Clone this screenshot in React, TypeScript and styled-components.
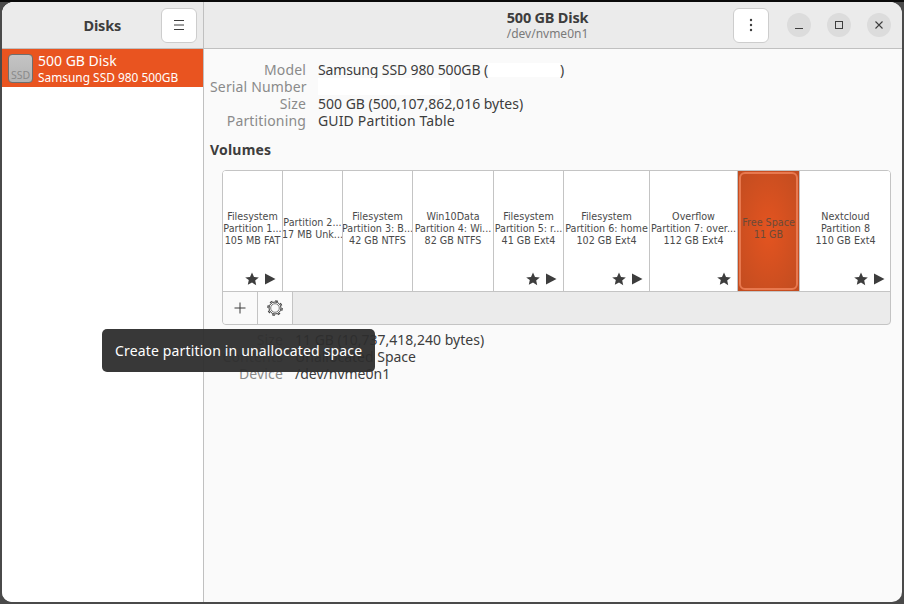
import styled, { createGlobalStyle } from "styled-components";

const partitions = [
  { width: 60, lines: ["Filesystem", "Partition 1...", "105 MB FAT"], star: true, play: true },
  { width: 60, lines: ["Partition 2...", "17 MB Unk..."] },
  { width: 70, lines: ["Filesystem", "Partition 3: B...", "42 GB NTFS"] },
  { width: 81, lines: ["Win10Data", "Partition 4: Wi...", "82 GB NTFS"] },
  { width: 70, lines: ["Filesystem", "Partition 5: r...", "41 GB Ext4"], star: true, play: true },
  { width: 86, lines: ["Filesystem", "Partition 6: home", "102 GB Ext4"], star: true, play: true },
  { width: 88, lines: ["Overflow", "Partition 7: over...", "112 GB Ext4"], star: true },
  { width: 62, lines: ["Free Space", "11 GB"], selected: true },
  { width: 91, lines: ["Nextcloud", "Partition 8", "110 GB Ext4"], star: true, play: true },
];

const StarIcon = () => (
  <svg width="14" height="14" viewBox="0 0 14 14">
    <path d="M7 0.5l2 4.4 4.8.5-3.6 3.2 1 4.7L7 10.4l-4.2 2.4 1-4.7L.2 5.4 5 4.9z" fill="#3d3d3d" />
  </svg>
);

const PlayIcon = () => (
  <svg width="12" height="12" viewBox="0 0 12 12">
    <path d="M1 0.5L11.5 6 1 11.5z" fill="#3d3d3d" />
  </svg>
);

const App = () => {
  return (
    <>
      <GlobalStyle />
      <Window>
        <Sidebar>
          <SideHeader>
            <SideTitle>Disks</SideTitle>
            <HeaderButton>
              <svg width="16" height="16" viewBox="0 0 16 16">
                <path d="M3 3.5h10M3 8h10M3 12.5h10" stroke="#3d3d3d" strokeWidth="1" fill="none" />
              </svg>
            </HeaderButton>
          </SideHeader>
          <DiskRow>
            <DiskIcon>SSD</DiskIcon>
            <DiskText>
              <DiskName>500 GB Disk</DiskName>
              <DiskModel>Samsung SSD 980 500GB</DiskModel>
            </DiskText>
          </DiskRow>
        </Sidebar>
        <Main>
          <MainHeader>
            <span />
            <HeaderTitles>
              <MainTitle>500 GB Disk</MainTitle>
              <MainSub>/dev/nvme0n1</MainSub>
            </HeaderTitles>
            <HeaderActions>
              <HeaderButton>
                <svg width="16" height="16" viewBox="0 0 16 16">
                  <circle cx="8" cy="3" r="1.2" fill="#3d3d3d" />
                  <circle cx="8" cy="8" r="1.2" fill="#3d3d3d" />
                  <circle cx="8" cy="13" r="1.2" fill="#3d3d3d" />
                </svg>
              </HeaderButton>
              <WindowControls>
                <RoundButton>
                  <svg width="10" height="10" viewBox="0 0 10 10">
                    <path d="M1 8.5h8" stroke="#3d3d3d" strokeWidth="1" />
                  </svg>
                </RoundButton>
                <RoundButton>
                  <svg width="10" height="10" viewBox="0 0 10 10">
                    <rect x="1.5" y="1.5" width="7" height="7" stroke="#3d3d3d" fill="none" />
                  </svg>
                </RoundButton>
                <RoundButton>
                  <svg width="10" height="10" viewBox="0 0 10 10">
                    <path d="M1.5 1.5l7 7M8.5 1.5l-7 7" stroke="#3d3d3d" strokeWidth="1.1" />
                  </svg>
                </RoundButton>
              </WindowControls>
            </HeaderActions>
          </MainHeader>
          <Content>
            <DiskInfo>
              <InfoLabel>Model</InfoLabel>
              <InfoValue $spacing={-0.13}>
                Samsung SSD 980 500GB (<Redacted $width={72} $height={14} />)
              </InfoValue>
              <InfoLabel>Serial Number</InfoLabel>
              <InfoValue>
                <Redacted $width={132} $height={17} />
              </InfoValue>
              <InfoLabel>Size</InfoLabel>
              <InfoValue>500 GB (500,107,862,016 bytes)</InfoValue>
              <InfoLabel>Partitioning</InfoLabel>
              <InfoValue $spacing={0.15}>GUID Partition Table</InfoValue>
            </DiskInfo>
            <VolumesTitle>Volumes</VolumesTitle>
            <VolumeBox>
              <PartitionRow>
                {partitions.map((p) => (
                  <Partition key={p.lines.join()} $width={p.width} $selected={p.selected}>
                    {p.lines.map((line) => (
                      <PartitionLine key={line}>{line}</PartitionLine>
                    ))}
                    {p.star && (
                      <PartitionIcons>
                        <StarIcon />
                        {p.play && <PlayIcon />}
                      </PartitionIcons>
                    )}
                  </Partition>
                ))}
              </PartitionRow>
              <VolumeToolbar>
                <ToolButton>
                  <svg width="14" height="14" viewBox="0 0 14 14">
                    <path d="M7 1.5v11M1.5 7h11" stroke="#3d3d3d" strokeWidth="1" />
                  </svg>
                </ToolButton>
                <ToolButton>
                  <svg width="18" height="18" viewBox="0 0 18 18" fill="none">
                    <circle cx="9" cy="9" r="7.2" stroke="#3d3d3d" strokeWidth="1.2" strokeDasharray="2.8 2.85" />
                    <circle cx="9" cy="9" r="6" stroke="#3d3d3d" strokeWidth="1" />
                    <circle cx="9" cy="9" r="4.3" stroke="#777777" strokeWidth="1" />
                  </svg>
                </ToolButton>
              </VolumeToolbar>
            </VolumeBox>
            <VolumeInfo>
              <InfoLabel>Size</InfoLabel>
              <InfoValue>11 GB (10,737,418,240 bytes)</InfoValue>
              <InfoLabel>Contents</InfoLabel>
              <InfoValue>Unallocated Space</InfoValue>
              <InfoLabel>Device</InfoLabel>
              <InfoValue>/dev/nvme0n1</InfoValue>
            </VolumeInfo>
          </Content>
        </Main>
        <Tooltip>Create partition in unallocated space</Tooltip>
      </Window>
    </>
  );
};

export default App;

const GlobalStyle = createGlobalStyle`
  html, body {
    margin: 0;
    padding: 0;
    width: 904px;
    height: 604px;
    overflow: hidden;
    background: linear-gradient(#0a0a0a 0 2px, #4a4a4a 2px);
    font-family: "Noto Sans", sans-serif;
  }
`;
const Window = styled.div`
  position: relative;
  box-sizing: border-box;
  width: 900px;
  height: 600px;
  margin: 2px 0 0 2px;
  display: flex;
  border-radius: 12px 12px 10px 10px;
  overflow: hidden;
  background: #fafafa;
  color: #3d3d3d;
`;
const Sidebar = styled.div`
  width: 201px;
  flex-shrink: 0;
  display: flex;
  flex-direction: column;
  background: #ffffff;
  border-right: 1px solid #c0c0c0;
`;
const SideHeader = styled.div`
  box-sizing: border-box;
  height: 47px;
  display: flex;
  align-items: center;
  justify-content: flex-end;
  padding: 0 6px 0 0;
  gap: 40px;
  background: #ebebeb;
  border-bottom: 1px solid #c0c0c0;
`;
const SideTitle = styled.div`
  font-size: 14.5px;
  font-weight: 700;
  letter-spacing: -0.2px;
`;
const HeaderButton = styled.div`
  box-sizing: border-box;
  width: 36px;
  height: 35px;
  display: flex;
  align-items: center;
  justify-content: center;
  background: #ffffff;
  border: 1px solid #cdcdcd;
  border-radius: 6px;
`;
const DiskRow = styled.div`
  box-sizing: border-box;
  height: 38px;
  display: flex;
  align-items: center;
  gap: 5px;
  padding-left: 6px;
  background: #e95420;
  color: #ffffff;
`;
const DiskIcon = styled.div`
  box-sizing: border-box;
  width: 25px;
  height: 29px;
  display: flex;
  align-items: flex-end;
  justify-content: center;
  border: 1px solid #6e6e6e;
  border-radius: 4px;
  background: linear-gradient(#c4c4c4, #b4b4b4);
  color: #8a8a8a;
  font-size: 10.5px;
  line-height: 13px;
`;
const DiskText = styled.div`
  display: flex;
  flex-direction: column;
  padding-top: 1px;
`;
const DiskName = styled.div`
  font-size: 14px;
  line-height: 18px;
`;
const DiskModel = styled.div`
  font-size: 11.9px;
  line-height: 15px;
`;
const Main = styled.div`
  flex: 1;
  display: flex;
  flex-direction: column;
  min-width: 0;
`;
const MainHeader = styled.div`
  box-sizing: border-box;
  height: 47px;
  display: grid;
  grid-template-columns: 1fr auto 1fr;
  align-items: center;
  padding: 0 11px 0 0;
  background: #ebebeb;
  border-bottom: 1px solid #c0c0c0;
`;
const HeaderTitles = styled.div`
  display: flex;
  flex-direction: column;
  align-items: center;
`;
const HeaderActions = styled.div`
  display: flex;
  align-items: center;
  justify-content: flex-end;
`;
const MainTitle = styled.div`
  font-size: 14.5px;
  font-weight: 700;
  line-height: 17px;
  letter-spacing: -0.2px;
`;
const MainSub = styled.div`
  font-size: 12px;
  line-height: 15px;
  color: #7a7a7a;
`;
const WindowControls = styled.div`
  display: flex;
  gap: 16px;
  margin-left: 18px;
`;
const RoundButton = styled.div`
  width: 24px;
  height: 24px;
  display: flex;
  align-items: center;
  justify-content: center;
  border-radius: 50%;
  background: #dcdcdc;
`;
const Content = styled.div`
  flex: 1;
  display: flex;
  flex-direction: column;
  padding: 12px 11px 0 6px;
  font-size: 14px;
  line-height: 17px;
`;
const DiskInfo = styled.div`
  display: grid;
  grid-template-columns: 96px 1fr;
  column-gap: 12px;
  grid-auto-rows: 17px;
`;
const InfoLabel = styled.div`
  text-align: right;
  color: #8a8a8a;
  white-space: nowrap;
  letter-spacing: 0.15px;
`;
const InfoValue = styled.div<{ $spacing?: number }>`
  display: flex;
  align-items: center;
  white-space: pre;
  letter-spacing: ${(p) => p.$spacing ?? 0}px;
`;
const Redacted = styled.span<{ $width: number; $height: number }>`
  display: inline-block;
  width: ${(p) => p.$width}px;
  height: ${(p) => p.$height}px;
  background: #ffffff;
`;
const VolumesTitle = styled.div`
  margin-top: 12px;
  font-weight: 700;
  line-height: 17px;
  letter-spacing: 0.2px;
`;
const VolumeBox = styled.div`
  box-sizing: border-box;
  width: 669px;
  margin: 12px 0 0 12px;
  border: 1px solid #c4c4c4;
  border-radius: 4px;
  overflow: hidden;
  background: #ebebeb;
`;
const PartitionRow = styled.div`
  display: flex;
  height: 120px;
  background: #ffffff;
  border-bottom: 1px solid #c4c4c4;
`;
const Partition = styled.div<{ $width: number; $selected?: boolean }>`
  position: relative;
  box-sizing: border-box;
  flex: 0 0 ${(p) => p.$width}px;
  display: flex;
  flex-direction: column;
  align-items: center;
  justify-content: center;
  padding-bottom: 4px;
  border-right: 1px solid #c4c4c4;
  font-family: "DejaVu Sans", sans-serif;
  font-size: 9.6px;
  line-height: 12px;
  color: ${(p) => (p.$selected ? "#6b4a38" : "#4a4a4a")};
  white-space: nowrap;
  overflow: hidden;
  background: ${(p) =>
    p.$selected ? "radial-gradient(ellipse at center, #e45420, #c04c20)" : "#ffffff"};
  &:last-child {
    border-right: none;
  }
  ${(p) =>
    p.$selected &&
    `&::after {
      content: "";
      position: absolute;
      inset: 1px 1px 1px 1px;
      border: 2px solid #e8794f;
      border-radius: 6px;
    }`}
`;
const PartitionLine = styled.div`
  white-space: nowrap;
`;
const PartitionIcons = styled.div`
  position: absolute;
  right: 6px;
  bottom: 5px;
  display: flex;
  align-items: center;
  gap: 5px;
`;
const VolumeToolbar = styled.div`
  display: flex;
  height: 32px;
`;
const ToolButton = styled.div`
  box-sizing: border-box;
  width: 35px;
  display: flex;
  align-items: center;
  justify-content: center;
  background: #fafafa;
  border-right: 1px solid #c4c4c4;
`;
const VolumeInfo = styled(DiskInfo)`
  margin-top: 6px;
  grid-template-columns: 73px 1fr;
`;
const Tooltip = styled.div`
  position: absolute;
  left: 100px;
  top: 327px;
  box-sizing: border-box;
  width: 273px;
  height: 43px;
  display: flex;
  align-items: center;
  padding-left: 13px;
  border-radius: 5px;
  background: rgba(45, 45, 45, 0.95);
  color: #ffffff;
  font-size: 14px;
  letter-spacing: 0.16px;
`;
